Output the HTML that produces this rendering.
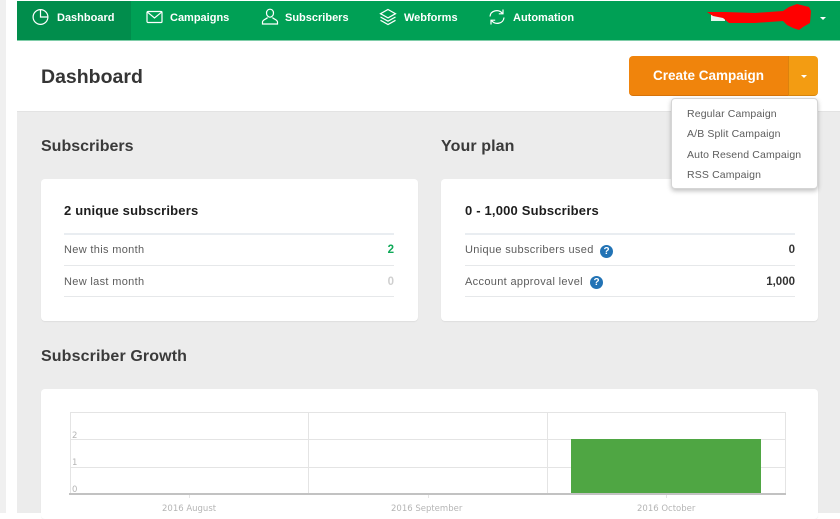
<!DOCTYPE html>
<html><head><meta charset="utf-8"><style>
*{box-sizing:border-box}
html,body{margin:0;padding:0}
body{width:840px;height:513px;overflow:hidden;position:relative;background:#fff;font-family:"Liberation Sans",sans-serif}
.a{position:absolute;white-space:nowrap}
.nav{font-size:11px;font-weight:bold;color:#fff;top:11px;line-height:13px;padding-top:1px}
h2{margin:0;position:absolute;font-size:16px;font-weight:bold;color:#3a3a3a;line-height:20px;white-space:nowrap}
.card{position:absolute;background:#fff;border-radius:4px;box-shadow:0 1px 1px rgba(0,0,0,.06)}
.l{position:absolute;height:1px;background:#e6e8ea}
.t{position:absolute;font-size:11px;letter-spacing:.33px;color:#5c5c5c;line-height:14px;white-space:nowrap}
.b{position:absolute;font-size:13px;letter-spacing:.18px;font-weight:bold;color:#1d1d1d;line-height:16px;white-space:nowrap}
.r{position:absolute;font-size:11.5px;font-weight:bold;line-height:14px;text-align:right;white-space:nowrap}
.q{position:absolute;width:13px;height:13px;border-radius:50%;background:#2273b5;color:#fff;font-size:10px;font-weight:bold;line-height:13px;text-align:center}
.m{position:absolute;left:687px;font-size:10.5px;letter-spacing:.14px;color:#5c5c5c;line-height:14px;white-space:nowrap}
.g{position:absolute;background:#e4e4e4}
.y{position:absolute;font-family:"DejaVu Sans",sans-serif;font-size:8.5px;color:#b5b5b5;line-height:10px}
.x{position:absolute;font-family:"DejaVu Sans",sans-serif;font-size:8.5px;color:#b5b5b5;line-height:10px;white-space:nowrap}
svg{position:absolute;fill:none;stroke:#fff;stroke-width:1.2}
</style></head><body>
<div class="a" style="left:0;top:0;width:6px;height:513px;background:#f0f0f0"></div>
<div class="a" style="left:17px;top:112px;width:823px;height:401px;background:#ececec"></div>
<div class="a" style="left:17px;top:111px;width:823px;height:1px;background:#e3e3e3"></div>

<div class="a" style="left:17px;top:1px;width:823px;height:39px;background:#00a055"></div>
<div class="a" style="left:17px;top:40px;width:823px;height:1px;background:#7fcda8"></div>
<div class="a" style="left:17px;top:1px;width:114px;height:39px;background:#018d4c"></div>

<svg style="left:32px;top:8px" width="18" height="18" viewBox="0 0 18 18"><circle cx="8.500" cy="9" r="7.400"/><path d="M8.500 1.600V9H16"/></svg>
<div class="a nav" style="left:57px">Dashboard</div>
<svg style="left:146px;top:9px" width="18" height="16" viewBox="0 0 18 16"><rect x="1" y="2.500" width="15" height="11" rx="1"/><path d="M1.500 3.200L8.500 9 15.500 3.200"/></svg>
<div class="a nav" style="left:170px">Campaigns</div>
<svg style="left:261px;top:8px" width="18" height="18" viewBox="0 0 18 18"><path d="M5.500 5C5.500 2.800 7 1.200 9 1.200S12.500 2.800 12.500 5 11 9.200 9 9.200 5.500 7.200 5.500 5Z"/><path d="M6.500 9.500C6 11 1.500 11.500 1.500 14V16H16.500V14C16.500 11.500 12 11 11.500 9.500"/></svg>
<div class="a nav" style="left:285px">Subscribers</div>
<svg style="left:379px;top:8px" width="18" height="18" viewBox="0 0 18 18"><path d="M9 1.500L16.500 5.700 9 9.900 1.500 5.700Z"/><path d="M1.500 9L9 13.200 16.500 9"/><path d="M1.500 12.300L9 16.500 16.500 12.300"/></svg>
<div class="a nav" style="left:404px">Webforms</div>
<svg style="left:488px;top:8px" width="18" height="18" viewBox="0 0 18 18"><path d="M2 8.500C2.500 2.500 10.500 .5 14.500 5.500"/><path d="M15 1.500V5.800H10.800"/><path d="M16 9.500C15.500 15.500 7.500 17.500 3.500 12.500"/><path d="M3 16.500V12.200H7.200"/></svg>
<div class="a nav" style="left:513px">Automation</div>

<div class="a" style="left:711px;top:15px;width:14px;height:6px;background:#e8f5ee"></div>
<svg style="left:705px;top:3px;stroke:none" width="110" height="30" viewBox="0 0 110 30"><path d="M2 9L20 9 50 10 78 8 84 4 92 1 104 4 106 8 105 20 98 24 94 27 88 25 82 22 78 18 50 20 24 20 18 15 8 13Z" fill="#ff0000"/></svg>
<div class="a" style="left:820px;top:17px;width:0;height:0;border:3px solid transparent;border-top:3px solid #fff;border-bottom:0"></div>

<h2 style="left:41px;top:65px;font-size:19.500px;line-height:24px;color:#353535">Dashboard</h2>

<div class="a" style="left:629px;top:56px;width:160px;height:40px;background:#f0840c;border-radius:4px 0 0 4px;border-bottom:1px solid #d6730a"></div>
<div class="a" style="left:788px;top:56px;width:30px;height:40px;background:#f39c12;border-radius:0 4px 4px 0;border-bottom:1px solid #d6860f;border-left:1px solid #dc820c"></div>
<div class="a" style="left:629px;top:67px;width:159px;text-align:center;font-size:13.500px;font-weight:bold;color:#fff;line-height:17px">Create Campaign</div>
<div class="a" style="left:801px;top:75px;width:0;height:0;border:3px solid transparent;border-top:3px solid #fff;border-bottom:0"></div>

<h2 style="left:41px;top:136px;padding-top:1px">Subscribers</h2>
<h2 style="left:441px;top:136px;padding-top:1px;letter-spacing:.1px">Your plan</h2>

<div class="card" style="left:41px;top:179px;width:377px;height:142px"></div>
<div class="b" style="left:64px;top:203px">2 unique subscribers</div>
<div class="l" style="left:64px;top:233px;width:330px;height:2px;background:#e9edf1"></div>
<div class="t" style="left:64px;top:243px">New this month</div>
<div class="r" style="right:446px;top:243px;color:#0fa958">2</div>
<div class="l" style="left:64px;top:265px;width:330px"></div>
<div class="t" style="left:64px;top:275px">New last month</div>
<div class="r" style="right:446px;top:275px;color:#cfcfcf">0</div>
<div class="l" style="left:64px;top:296px;width:330px"></div>

<div class="card" style="left:441px;top:179px;width:377px;height:142px"></div>
<div class="b" style="left:465px;top:203px">0 - 1,000 Subscribers</div>
<div class="l" style="left:465px;top:233px;width:330px;height:2px;background:#e9edf1"></div>
<div class="t" style="left:465px;top:243px">Unique subscribers used</div>
<div class="q" style="left:600px;top:245px">?</div>
<div class="r" style="right:45px;top:243px;color:#333">0</div>
<div class="l" style="left:465px;top:265px;width:330px"></div>
<div class="t" style="left:465px;top:275px">Account approval level</div>
<div class="q" style="left:590px;top:276px">?</div>
<div class="r" style="right:45px;top:275px;color:#333">1,000</div>
<div class="l" style="left:465px;top:296px;width:330px"></div>

<div class="a" style="left:671px;top:98px;width:147px;height:91px;background:#fff;border:1px solid #d5d5d5;border-radius:4px;box-shadow:0 2px 5px rgba(0,0,0,.25)"></div>
<div class="m" style="top:107px">Regular Campaign</div>
<div class="m" style="top:127px">A/B Split Campaign</div>
<div class="m" style="top:148px">Auto Resend Campaign</div>
<div class="m" style="top:168px">RSS Campaign</div>

<h2 style="left:41px;top:346px;padding-top:1px;letter-spacing:.12px">Subscriber Growth</h2>
<div class="card" style="left:41px;top:389px;width:777px;height:130px"></div>

<div class="g" style="left:70px;top:412px;width:715px;height:1px"></div>
<div class="g" style="left:70px;top:439px;width:715px;height:1px"></div>
<div class="g" style="left:70px;top:467px;width:715px;height:1px"></div>
<div class="g" style="left:70px;top:412px;width:1px;height:82px"></div>
<div class="g" style="left:308px;top:412px;width:1px;height:82px"></div>
<div class="g" style="left:547px;top:412px;width:1px;height:82px"></div>
<div class="g" style="left:785px;top:412px;width:1px;height:82px"></div>
<div class="a" style="left:571px;top:439px;width:190px;height:55px;background:#4fa643"></div>
<div class="a" style="left:69px;top:493px;width:717px;height:2px;background:#c2c2c2"></div>
<div class="g" style="left:189px;top:495px;width:1px;height:3px"></div>
<div class="g" style="left:428px;top:495px;width:1px;height:3px"></div>
<div class="g" style="left:666px;top:495px;width:1px;height:3px"></div>
<div class="y" style="left:72px;top:431px">2</div>
<div class="y" style="left:72px;top:458px">1</div>
<div class="y" style="left:72px;top:485px">0</div>
<div class="x" style="left:162px;top:504px">2016 August</div>
<div class="x" style="left:391px;top:504px">2016 September</div>
<div class="x" style="left:637px;top:504px">2016 October</div>
</body></html>
